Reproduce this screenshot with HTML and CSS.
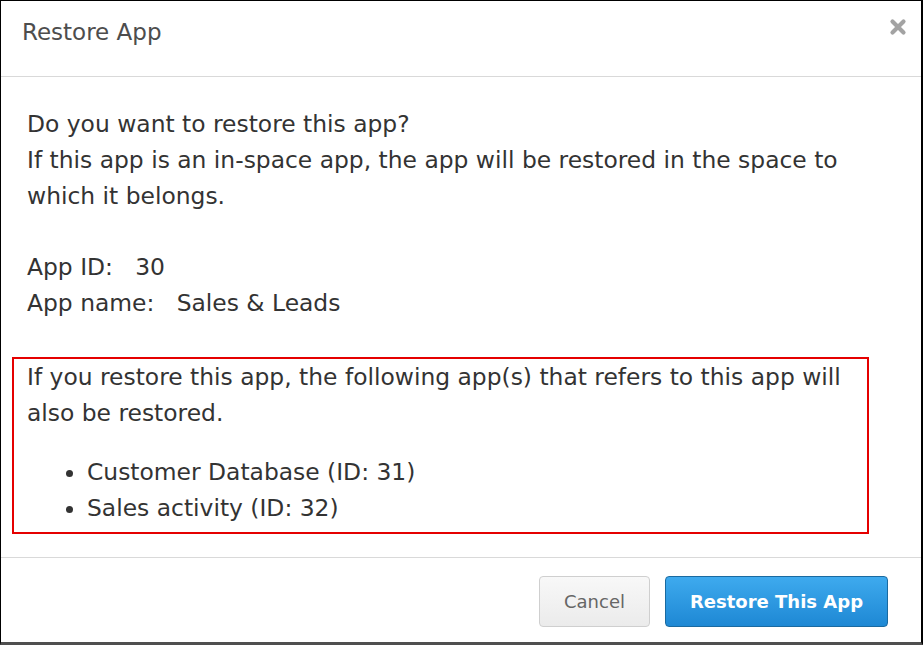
FILE: index.html
```html
<!DOCTYPE html>
<html lang="en">
<head>
<meta charset="utf-8">
<title>Restore App</title>
<link rel="stylesheet" href="styles.css">
</head>
<body>
<div class="dialog">
  <header class="dialog-header">
    <h1 class="dialog-title">Restore App</h1>
    <button class="close" aria-label="Close">
      <svg width="18" height="18" viewBox="0 0 18 18"><path d="M3.5 3.5 L14.5 14.5 M14.5 3.5 L3.5 14.5" stroke="#a3a3a3" stroke-width="4.2" stroke-linecap="round"/></svg>
    </button>
  </header>
  <main class="dialog-body">
    <p class="para">Do you want to restore this app?<br>If this app is an in-space app, the app will be restored in the space to which it belongs.</p>
    <p class="para info">App ID:&nbsp;&nbsp; 30<br>App name:&nbsp;&nbsp; Sales &amp; Leads</p>
    <div class="notice">
      <p class="para">If you restore this app, the following app(s) that refers to this app will also be restored.</p>
      <ul class="app-list">
        <li>Customer Database (ID: 31)</li>
        <li>Sales activity (ID: 32)</li>
      </ul>
    </div>
  </main>
  <footer class="dialog-footer">
    <button class="btn btn-cancel">Cancel</button>
    <button class="btn btn-primary">Restore This App</button>
  </footer>
</div>
</body>
</html>
```
FILE: styles.css
```css
* { box-sizing: border-box; }
html, body { margin: 0; padding: 0; background: #fff; }
body {
  font-family: "DejaVu Sans", Verdana, sans-serif;
  color: #333;
}
.dialog {
  width: 923px;
  height: 645px;
  border-top: 1px solid #000;
  border-left: 1px solid #000;
  border-right: 2px solid #000;
  border-bottom: 3px solid #4f4f4f;
  display: flex;
  flex-direction: column;
  background: #fff;
}
.dialog-header {
  height: 76px;
  border-bottom: 1px solid #d9d9d9;
  display: flex;
  align-items: flex-start;
  justify-content: space-between;
  padding: 0 14px 0 21px;
}
.dialog-title {
  margin: 14px 0 0;
  font-size: 23px;
  font-weight: normal;
  line-height: 34px;
  color: #4d4d4d;
}
.close {
  margin-top: 17px;
  padding: 0;
  border: 0;
  background: none;
  width: 18px;
  height: 18px;
  display: flex;
}
.dialog-body {
  padding: 29px 27px 23px 26px;
  font-size: 23.4px;
  line-height: 36px;
  border-bottom: 1px solid #d9d9d9;
}
.para { margin: 0; }
.info { margin-top: 35px; }
.notice {
  margin: 36px 25px 0 -15px;
  border: 2px solid #e50000;
  padding: 0 10px 6px 13px;
}
.app-list {
  margin: 23px 0 0;
  padding-left: 60px;
}
.dialog-footer {
  flex: 1;
  display: flex;
  justify-content: flex-end;
  align-items: flex-start;
  gap: 15px;
  padding: 18px 33px 0 0;
}
.btn {
  height: 51px;
  border-radius: 4px;
  font-family: "DejaVu Sans", Verdana, sans-serif;
  cursor: pointer;
}
.btn-cancel {
  width: 111px;
  font-size: 18px;
  color: #666;
  background: linear-gradient(#f8f8f8, #ebebeb);
  border: 1px solid #cfcfcf;
}
.btn-primary {
  width: 223px;
  font-size: 18px;
  font-weight: bold;
  color: #fff;
  background: linear-gradient(#3eaaee, #1e88d4);
  border: 1px solid #1a6aa0;
}
```
